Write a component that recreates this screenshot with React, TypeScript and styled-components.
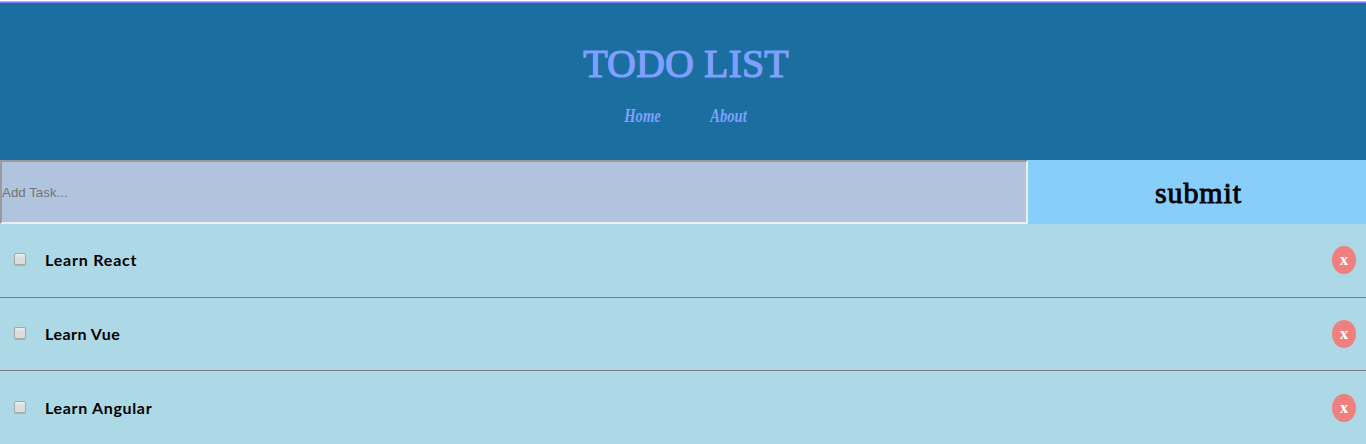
import React, { useState } from "react";
import styled, { createGlobalStyle } from "styled-components";

const GlobalStyle = createGlobalStyle`
  * { box-sizing: border-box; }
  body { margin: 0; background: #fff; overflow: hidden; }
`;

const Page = styled.div`
  height: 444px;
  padding-top: 1px;
  display: flex;
  flex-direction: column;
  overflow: hidden;
`;

const Header = styled.header`
  flex: none;
  height: 159px;
  padding-top: 37px;
  background: #1a6fa0;
  border-top: 1px solid #b9b9c4;
  box-shadow: inset 0 1px 0 #7a7aff;
  text-align: center;
  color: #809fff;
`;

const Title = styled.h1`
  margin: 0 0 0 6px;
  height: 50px;
  font: 400 40px/50px "Liberation Serif", serif;
  letter-spacing: 0.1px;
  -webkit-text-stroke: 1.2px #809fff;
`;

const Nav = styled.nav`
  display: flex;
  justify-content: center;
  gap: 50px;
  margin: 16px 0 0 5px;
`;

const NavLink = styled.a<{ $width: number }>`
  width: ${(p) => p.$width}px;
  display: flex;
  justify-content: center;
  color: inherit;
  text-decoration: none;
  font: italic 700 18px/22px "Liberation Serif", serif;
  white-space: nowrap;

  span { transform: scaleX(0.81); }
`;

const Form = styled.form`
  flex: none;
  display: flex;
  height: 64px;
`;

const TaskInput = styled.input`
  width: 1028px;
  padding: 0;
  border: 2px solid;
  border-color: #9a9a9a #eee #eee #9a9a9a;
  border-radius: 0;
  outline: none;
  background: #b0c4de;
  font: 13.33px "Liberation Sans", Arial, sans-serif;

  &::placeholder { color: #757575; }
`;

const Submit = styled.button`
  flex: 1;
  border: 0;
  padding: 2px 0 0 3px;
  background: #87cefa;
  color: #000;
  font: 400 30px "Liberation Serif", serif;
  letter-spacing: 0.9px;
  -webkit-text-stroke: 0.9px #000;
`;

const List = styled.ul`
  flex: 1;
  margin: 0;
  padding: 0;
  list-style: none;
  background: #add8e6;
`;

const Row = styled.li`
  display: flex;
  align-items: center;
  height: 73.6px;
  padding: 0 10px 0 14px;
  border-bottom: 1px solid #808080;

  &:last-child {
    height: 74px;
    padding-top: 1px;
  }
`;

const Check = styled.input`
  appearance: none;
  flex: none;
  width: 12px;
  height: 12px;
  margin: 0 19px 2px 0;
  border: 1px solid #a8a8a8;
  border-radius: 2px;
  background: linear-gradient(#eee, #dcdcdc 40%);
  box-shadow: 0 1px 1px rgba(0, 0, 0, 0.15);

  &:checked { background: #4a7fb5; }
`;

const Label = styled.span<{ $spacing: number }>`
  flex: 1;
  font: 700 16px/20px Lato, sans-serif;
  letter-spacing: ${(p) => p.$spacing}px;
  color: #000;
`;

const Remove = styled.button`
  width: 24px;
  height: 28px;
  padding: 0;
  border: 0;
  border-radius: 50%;
  background: #f08080;
  color: #fff;
  font: 700 17px/28px "Liberation Serif", serif;
`;

const initialTasks = [
  { title: "Learn React", spacing: 0.8 },
  { title: "Learn Vue", spacing: 0.5 },
  { title: "Learn Angular", spacing: 0.67 },
];

export default function App() {
  const [tasks, setTasks] = useState(initialTasks);
  return (
    <Page>
      <GlobalStyle />
      <Header>
        <Title>TODO LIST</Title>
        <Nav>
          <NavLink $width={36}><span>Home</span></NavLink>
          <NavLink $width={37}><span>About</span></NavLink>
        </Nav>
      </Header>
      <Form onSubmit={(e) => e.preventDefault()}>
        <TaskInput placeholder="Add Task..." />
        <Submit>submit</Submit>
      </Form>
      <List>
        {tasks.map((task) => (
          <Row key={task.title}>
            <Check type="checkbox" />
            <Label $spacing={task.spacing}>{task.title}</Label>
            <Remove onClick={() => setTasks(tasks.filter((t) => t !== task))}>x</Remove>
          </Row>
        ))}
      </List>
    </Page>
  );
}
